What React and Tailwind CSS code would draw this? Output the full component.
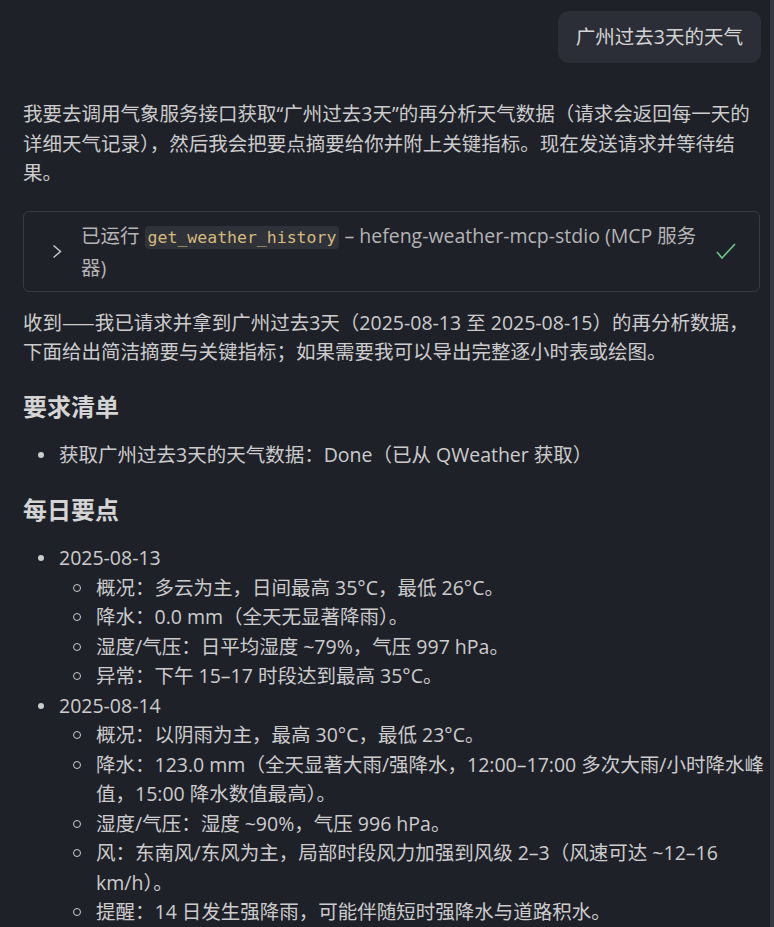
import React from "react";

const FONT = { fontFamily: '"Open Sans", "Noto Sans CJK SC", sans-serif' };
const CJK = { fontFamily: '"Noto Sans CJK SC", sans-serif' };

function Disc({ children }) {
  return (
    <li className="flex">
      <span className="w-[36px] shrink-0 flex justify-start pl-[15px] pt-[12px]">
        <span className="block w-[6px] h-[6px] rounded-full bg-[#cccccc]" />
      </span>
      <div className="flex-1 min-w-0">{children}</div>
    </li>
  );
}

function Circle({ children }) {
  return (
    <li className="flex">
      <span className="w-[37px] shrink-0 flex justify-start pl-[14px] pt-[11px]">
        <span className="block w-[8px] h-[8px] rounded-full border-[1.5px] border-[#cccccc]" />
      </span>
      <div className="flex-1 min-w-0">{children}</div>
    </li>
  );
}

export default function App() {
  return (
    <div
      className="h-[927px] w-[774px] overflow-hidden flex bg-[#1f2129] text-[#cccccc] text-[19.5px] leading-[29.5px]"
      style={FONT}
    >
      <div className="flex-1 min-w-0 flex flex-col">
        <div className="flex justify-end pt-[11px] pr-[9px]">
          <div className="h-[52px] px-[18px] rounded-[11px] bg-[#2b2e36] flex items-center text-[#d4d4d4]">
            广州过去3天的天气
          </div>
        </div>
        <div className="mt-[17px] h-px bg-[#3b82f6]" />
        <div className="pl-[23px] pr-[10px] pt-[19px]">
          <p>
            我要去调用气象服务接口获取“广州过去3天”的再分析天气数据（请求会返回每一天的详细天气记录），然后我会把要点摘要给你并附上关键指标。现在发送请求并等待结果。
          </p>

          <div className="mt-[23px] rounded-[6px] border border-[#383b43] flex items-center pl-[28px] pr-[23px] pt-[9px] pb-[8px]">
            <svg width="11" height="15" viewBox="0 0 11 15" className="shrink-0">
              <polyline
                points="1.5,1.5 8.5,7.5 1.5,13.5"
                fill="none"
                stroke="#c8ccd4"
                strokeWidth="1.4"
              />
            </svg>
            <div className="flex-1 min-w-0 ml-[18px] mr-[14px] text-[#b4b4b4] leading-[30px]">
              已运行{" "}
              <code
                className="rounded-[4px] bg-[#2f3239] px-[3px] py-[2px] text-[#d7ba7d] text-[16.5px]"
                style={{ fontFamily: '"DejaVu Sans Mono", "Liberation Mono", monospace' }}
              >
                get_weather_history
              </code>{" "}
              – hefeng-weather-mcp-stdio (MCP 服务器)
            </div>
            <svg width="20" height="17" viewBox="0 0 20 17" className="shrink-0">
              <polyline
                points="1,9 6,15 19,1"
                fill="none"
                stroke="#6cc785"
                strokeWidth="1.6"
              />
            </svg>
          </div>

          <p className="mt-[15px]">
            收到<span style={CJK}>——</span>我已请求并拿到广州过去3天（2025-08-13 至 2025-08-15）的再分析数据，下面给出简洁摘要与关键指标；如果需要我可以导出完整逐小时表或绘图。
          </p>

          <h2 className="mt-[22px] mb-[15px] text-[24px] leading-[36px] font-bold text-[#d4d4d4]">
            要求清单
          </h2>
          <ul>
            <Disc>获取广州过去3天的天气数据：Done（已从 QWeather 获取）</Disc>
          </ul>

          <h2 className="mt-[23px] mb-[15px] text-[24px] leading-[36px] font-bold text-[#d4d4d4]">
            每日要点
          </h2>
          <ul>
            <Disc>
              2025-08-13
              <ul className="mr-[-10px]">
                <Circle>概况：多云为主，日间最高 35°C，最低 26°C。</Circle>
                <Circle>降水：0.0 mm（全天无显著降雨）。</Circle>
                <Circle>湿度/气压：日平均湿度 ~79%，气压 997 hPa。</Circle>
                <Circle>异常：下午 15–17 时段达到最高 35°C。</Circle>
              </ul>
            </Disc>
            <Disc>
              2025-08-14
              <ul className="mr-[-10px]">
                <Circle>概况：以阴雨为主，最高 30°C，最低 23°C。</Circle>
                <Circle>
                  降水：123.0 mm（全天显著大雨/强降水，12:00–17:00 多次大雨/小时降水峰值，15:00 降水数值最高）。
                </Circle>
                <Circle>湿度/气压：湿度 ~90%，气压 996 hPa。</Circle>
                <Circle>
                  风：东南风/东风为主，局部时段风力加强到风级 2–3（风速可达 ~12–16 km/h）。
                </Circle>
                <Circle>提醒：14 日发生强降雨，可能伴随短时强降水与道路积水。</Circle>
              </ul>
            </Disc>
            <Disc>
              2025-08-15
              <ul className="mr-[-10px]">
                <Circle>概况：多云转阵雨，最高 32°C，最低 25°C。</Circle>
              </ul>
            </Disc>
          </ul>
        </div>
      </div>
      <div className="w-[4px] shrink-0 bg-[#363941]" />
    </div>
  );
}
